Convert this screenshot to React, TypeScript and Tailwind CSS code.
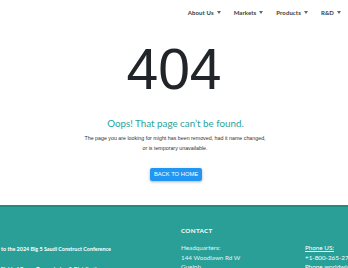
export default function App() {
  const nav = ["About Us", "Markets", "Products", "R&D"];
  return (
    <div className="w-[348px] h-[268px] overflow-hidden bg-white flex flex-col" style={{ fontFamily: "Lato, 'Open Sans', sans-serif" }}>
      <header className="h-[24px] flex items-center justify-end pr-[7px] gap-[13px] shrink-0">
        {nav.map((n) => (
          <div key={n} className="flex items-center gap-[3px] text-[6px] font-bold tracking-[0.1px] text-[#3a3a3a]">
            <span>{n}</span>
            <svg width="4" height="3" viewBox="0 0 4 3"><path d="M0 0h4L2 3z" fill="#666" /></svg>
          </div>
        ))}
      </header>
      <main className="flex flex-col items-center grow">
        <div className="mt-[17px] text-[57px] leading-[57px] text-[#212529]" style={{ fontFamily: "'Liberation Sans', Arial, sans-serif" }}>404</div>
        <div className="mt-[19px] ml-[3px] text-[9.8px] leading-[12px] text-[#2aa39a]">Oops! That page can’t be found.</div>
        <div className="mt-[4px] ml-[2px] text-[5.3px] leading-[10px] text-[#333] text-center" style={{ fontFamily: "'Liberation Sans', Arial, sans-serif" }}>
          The page you are looking for might has been removed, had it name changed,<br />or is temporary unavailable.
        </div>
        <button className="mt-[15px] ml-[4px] w-[52px] h-[13px] bg-[#2196f3] text-white text-[5.8px] leading-[13px] rounded-[2px] shadow-[0_1px_3px_rgba(0,0,0,0.3)]" style={{ fontFamily: "'Liberation Sans', Arial, sans-serif" }}>
          BACK TO HOME
        </button>
      </main>
      <footer className="h-[63px] shrink-0 bg-[#2a9f97] border-t-[2px] border-[#22897f] text-white flex">
        <div className="w-[181px] shrink-0 pt-[38px] flex flex-col gap-[12px] text-[5.4px] font-bold overflow-hidden whitespace-nowrap">
          <div className="pl-[1px]">to the 2024 Big 5 Saudi Construct Conference</div>
          <div className="-ml-[5px]">in Field of Power Transmission &amp; Distribution</div>
        </div>
        <div className="w-[124px] shrink-0 pt-[19px] text-[6.3px]">
          <div className="font-bold tracking-[0.3px] leading-[9px]">CONTACT</div>
          <div className="mt-[8px] leading-[9.5px] text-[#e4f4f2]">
            <div>Headquarters:</div>
            <div>144 Woodlawn Rd W</div>
            <div>Guelph</div>
          </div>
        </div>
        <div className="pt-[36px] text-[6.3px] whitespace-nowrap leading-[9.5px]">
          <div className="underline">Phone US:</div>
          <div>+1-800-265-2779</div>
          <div>Phone worldwide</div>
        </div>
      </footer>
    </div>
  );
}
